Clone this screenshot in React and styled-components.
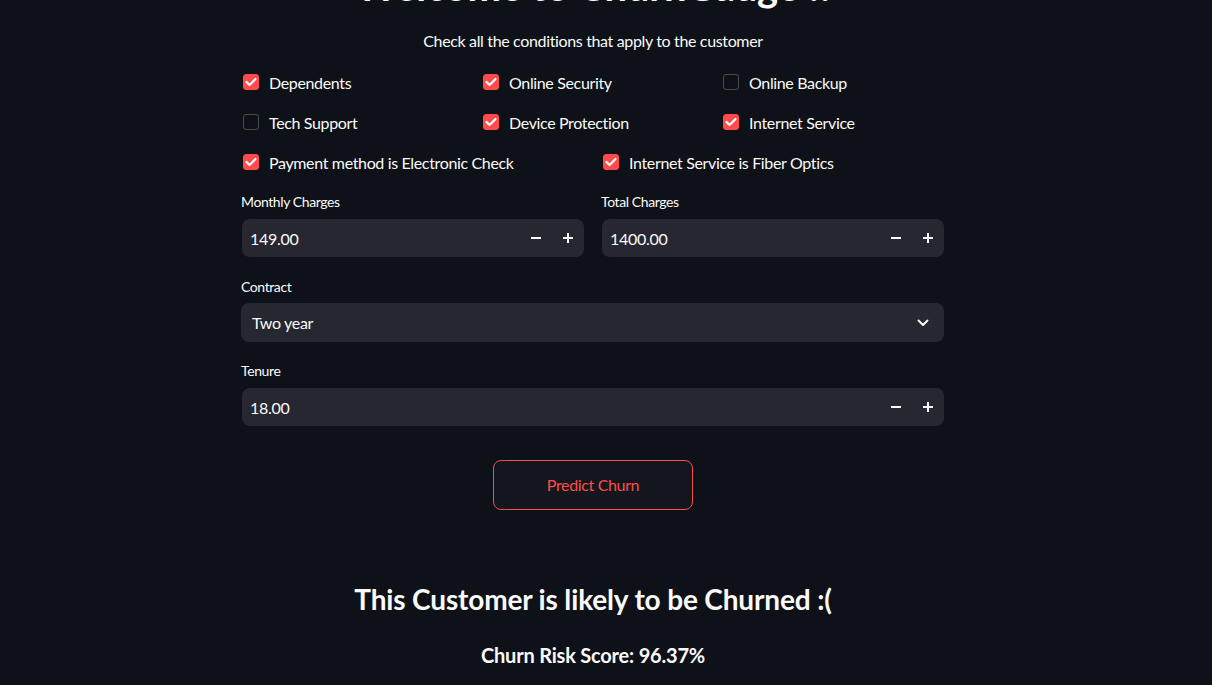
import React from "react";
import styled, { createGlobalStyle } from "styled-components";

const GlobalStyle = createGlobalStyle`
  body {
    margin: 0;
    background: #0e1117;
    color: #fafafa;
    font-family: Lato, "Noto Sans", sans-serif;
    overflow: hidden;
  }
`;

const Page = styled.div`
  display: flex;
  justify-content: center;
  padding-right: 26px;
`;

const Main = styled.main`
  width: 704px;
  display: flex;
  flex-direction: column;
`;

const Title = styled.h1`
  margin: -38px 0 0;
  font-size: 40px;
  line-height: 48px;
  font-weight: 700;
  letter-spacing: -0.2px;
  text-align: center;
`;

const Subtitle = styled.p`
  margin: 19px 0 0;
  font-size: 16px;
  line-height: 24px;
  letter-spacing: -0.35px;
  text-align: center;
`;

const CheckGrid = styled.div`
  display: grid;
  grid-template-columns: repeat(${(p) => p.cols}, 1fr);
  column-gap: 16px;
  row-gap: 16px;
  margin-top: ${(p) => p.top}px;
`;

const CheckItem = styled.label`
  display: flex;
  align-items: center;
  gap: 10px;
  height: 24px;
  padding-left: 2px;
  font-size: 16px;
  letter-spacing: -0.35px;
`;

const Box = styled.span`
  width: 16px;
  height: 16px;
  box-sizing: border-box;
  border-radius: 3px;
  display: flex;
  align-items: center;
  justify-content: center;
  background: ${(p) => (p.checked ? "#ff4b4b" : "transparent")};
  border: 1px solid ${(p) => (p.checked ? "#ff4b4b" : "rgba(250,250,250,0.25)")};
`;

const Row = styled.div`
  display: grid;
  grid-template-columns: 1fr 1fr;
  column-gap: 16px;
`;

const Field = styled.div`
  margin-top: ${(p) => p.top}px;
  display: flex;
  flex-direction: column;
`;

const FieldLabel = styled.div`
  font-size: 14px;
  line-height: 20px;
  letter-spacing: -0.4px;
  margin-bottom: ${(p) => p.gap ?? 7}px;
`;

const InputBox = styled.div`
  height: ${(p) => p.h}px;
  background: #262730;
  border-radius: 8px;
  display: flex;
  align-items: center;
  margin-left: ${(p) => p.inset ?? 1}px;
  margin-right: 1px;
`;

const Value = styled.span`
  flex: 1;
  font-size: 16px;
  letter-spacing: -0.3px;
  padding-left: ${(p) => p.pad}px;
`;

const Step = styled.span`
  width: 32px;
  height: 100%;
  display: flex;
  align-items: center;
  justify-content: center;
`;

const Chevron = styled.span`
  width: 42px;
  display: flex;
  justify-content: center;
`;

const ButtonWrap = styled.div`
  display: flex;
  justify-content: center;
  margin-top: 34px;
`;

const PredictButton = styled.button`
  width: 200px;
  height: 50px;
  box-sizing: border-box;
  padding-bottom: 2px;
  border: 1px solid #ff4b4b;
  border-radius: 8px;
  background: #13161d;
  color: #ff4b4b;
  font-family: inherit;
  font-size: 16px;
  letter-spacing: -0.35px;
`;

const Result = styled.h2`
  margin: 71px 0 0;
  font-size: 28px;
  line-height: 36px;
  font-weight: 700;
  letter-spacing: -0.15px;
  text-align: center;
`;

const Score = styled.h3`
  margin: 24px 0 0;
  font-size: 20px;
  line-height: 28px;
  font-weight: 700;
  letter-spacing: -0.2px;
  text-align: center;
`;

const Check = () => (
  <svg width="12" height="10" viewBox="0 0 12 10">
    <polyline points="1.5,5 4.5,8 10.5,2" fill="none" stroke="#fff" strokeWidth="2.2" strokeLinecap="round" strokeLinejoin="round" />
  </svg>
);

const Minus = () => (
  <svg width="10" height="10" viewBox="0 0 10 10">
    <rect x="0" y="4" width="10" height="2" fill="#fafafa" />
  </svg>
);

const Plus = () => (
  <svg width="10" height="10" viewBox="0 0 10 10">
    <rect x="0" y="4" width="10" height="2" fill="#fafafa" />
    <rect x="4" y="0" width="2" height="10" fill="#fafafa" />
  </svg>
);

const CheckBox = ({ checked, label }) => (
  <CheckItem>
    <Box checked={checked}>{checked && <Check />}</Box>
    {label}
  </CheckItem>
);

const NumberInput = ({ label, value, top, inset }) => (
  <Field top={top}>
    <FieldLabel>{label}</FieldLabel>
    <InputBox h={38} inset={inset}>
      <Value pad={8}>{value}</Value>
      <Step><Minus /></Step>
      <Step><Plus /></Step>
    </InputBox>
  </Field>
);

export default function App() {
  return (
    <>
      <GlobalStyle />
      <Page>
        <Main>
          <Title>Welcome to ChurnGauge !!</Title>
          <Subtitle>Check all the conditions that apply to the customer</Subtitle>
          <CheckGrid cols={3} top={17}>
            <CheckBox checked label="Dependents" />
            <CheckBox checked label="Online Security" />
            <CheckBox label="Online Backup" />
            <CheckBox label="Tech Support" />
            <CheckBox checked label="Device Protection" />
            <CheckBox checked label="Internet Service" />
          </CheckGrid>
          <CheckGrid cols={2} top={16}>
            <CheckBox checked label="Payment method is Electronic Check" />
            <CheckBox checked label="Internet Service is Fiber Optics" />
          </CheckGrid>
          <Row>
            <NumberInput label="Monthly Charges" value="149.00" top={18} />
            <NumberInput label="Total Charges" value="1400.00" top={18} />
          </Row>
          <Field top={20}>
            <FieldLabel gap={6}>Contract</FieldLabel>
            <InputBox h={39} inset={0}>
              <Value pad={11}>Two year</Value>
              <Chevron>
                <svg width="12" height="8" viewBox="0 0 12 8">
                  <polyline points="1.5,1.5 6,6 10.5,1.5" fill="none" stroke="#fafafa" strokeWidth="2" strokeLinecap="round" strokeLinejoin="round" />
                </svg>
              </Chevron>
            </InputBox>
          </Field>
          <NumberInput label="Tenure" value="18.00" top={19} />
          <ButtonWrap>
            <PredictButton>Predict Churn</PredictButton>
          </ButtonWrap>
          <Result>This Customer is likely to be Churned :(</Result>
          <Score>Churn Risk Score: 96.37%</Score>
        </Main>
      </Page>
    </>
  );
}
